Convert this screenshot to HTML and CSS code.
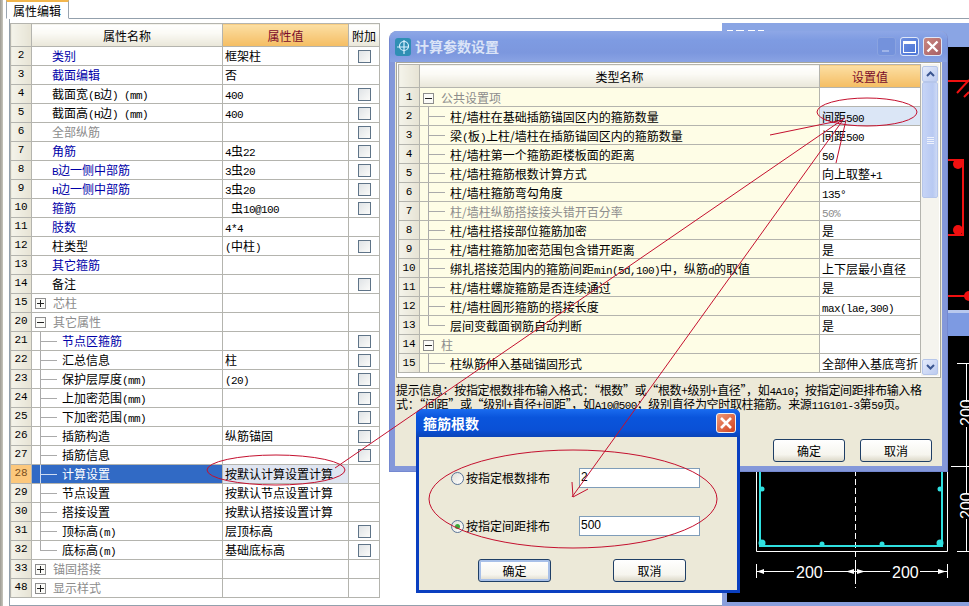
FILE: index.html
```html
<!DOCTYPE html>
<html lang="zh-CN">
<head>
<meta charset="utf-8">
<title>属性编辑</title>
<link rel="stylesheet" href="styles.css">
</head>
<body>
<div class="page">
  <div class="stripe"></div>
  <main class="editor">
    <div class="tab">属性编辑</div>
    <section class="panel">
      <table class="grid props">
        <colgroup><col class="c-num"><col class="c-name"><col class="c-val"><col class="c-add"></colgroup>
        <thead><tr><th class="num"></th><th>属性名称</th><th class="on">属性值</th><th>附加</th></tr></thead>
        <tbody>
          <tr><td class="num">2</td><td class="n blue">类别</td><td>框架柱</td><td class="add"><span class="cb"></span></td></tr>
          <tr><td class="num">3</td><td class="n blue">截面编辑</td><td>否</td><td></td></tr>
          <tr><td class="num">4</td><td class="n">截面宽<span class="m">(B</span>边<span class="m">) (mm)</span></td><td><span class="m">400</span></td><td class="add"><span class="cb"></span></td></tr>
          <tr><td class="num">5</td><td class="n">截面高<span class="m">(H</span>边<span class="m">) (mm)</span></td><td><span class="m">400</span></td><td class="add"><span class="cb"></span></td></tr>
          <tr><td class="num">6</td><td class="n grey">全部纵筋</td><td></td><td class="add"><span class="cb"></span></td></tr>
          <tr><td class="num">7</td><td class="n blue">角筋</td><td><span class="m">4</span>虫<span class="m">22</span></td><td class="add"><span class="cb"></span></td></tr>
          <tr><td class="num">8</td><td class="n blue"><span class="m">B</span>边一侧中部筋</td><td><span class="m">3</span>虫<span class="m">20</span></td><td class="add"><span class="cb"></span></td></tr>
          <tr><td class="num">9</td><td class="n blue"><span class="m">H</span>边一侧中部筋</td><td><span class="m">3</span>虫<span class="m">20</span></td><td class="add"><span class="cb"></span></td></tr>
          <tr><td class="num">10</td><td class="n blue">箍筋</td><td><span class="m"> </span>虫<span class="m">10@100</span></td><td class="add"><span class="cb"></span></td></tr>
          <tr><td class="num">11</td><td class="n blue">肢数</td><td><span class="m">4*4</span></td><td></td></tr>
          <tr><td class="num">12</td><td class="n">柱类型</td><td><span class="m">(</span>中柱<span class="m">)</span></td><td class="add"><span class="cb"></span></td></tr>
          <tr><td class="num">13</td><td class="n blue">其它箍筋</td><td></td><td></td></tr>
          <tr><td class="num">14</td><td class="n">备注</td><td></td><td class="add"><span class="cb"></span></td></tr>
          <tr><td class="num">15</td><td class="g grey"><span class="x plus"></span>芯柱</td><td></td><td></td></tr>
          <tr><td class="num">20</td><td class="g grey open"><span class="x"></span>其它属性</td><td></td><td></td></tr>
          <tr><td class="num">21</td><td class="t blue">节点区箍筋</td><td></td><td class="add"><span class="cb"></span></td></tr>
          <tr><td class="num">22</td><td class="t">汇总信息</td><td>柱</td><td class="add"><span class="cb"></span></td></tr>
          <tr><td class="num">23</td><td class="t">保护层厚度<span class="m">(mm)</span></td><td><span class="m">(20)</span></td><td class="add"><span class="cb"></span></td></tr>
          <tr><td class="num">24</td><td class="t">上加密范围<span class="m">(mm)</span></td><td></td><td class="add"><span class="cb"></span></td></tr>
          <tr><td class="num">25</td><td class="t">下加密范围<span class="m">(mm)</span></td><td></td><td class="add"><span class="cb"></span></td></tr>
          <tr><td class="num">26</td><td class="t">插筋构造</td><td>纵筋锚固</td><td class="add"><span class="cb"></span></td></tr>
          <tr><td class="num">27</td><td class="t">插筋信息</td><td></td><td class="add"><span class="cb"></span></td></tr>
          <tr class="sel"><td class="num">28</td><td class="t">计算设置</td><td>按默认计算设置计算</td><td></td></tr>
          <tr><td class="num">29</td><td class="t">节点设置</td><td>按默认节点设置计算</td><td></td></tr>
          <tr><td class="num">30</td><td class="t">搭接设置</td><td>按默认搭接设置计算</td><td></td></tr>
          <tr><td class="num">31</td><td class="t">顶标高<span class="m">(m)</span></td><td>层顶标高</td><td class="add"><span class="cb"></span></td></tr>
          <tr><td class="num">32</td><td class="t last">底标高<span class="m">(m)</span></td><td>基础底标高</td><td class="add"><span class="cb"></span></td></tr>
          <tr><td class="num">33</td><td class="g grey"><span class="x plus"></span>锚固搭接</td><td></td><td></td></tr>
          <tr><td class="num">48</td><td class="g grey"><span class="x plus"></span>显示样式</td><td></td><td></td></tr>
        </tbody>
      </table>
    </section>
  </main>

  <svg class="cad" width="247" height="586" viewBox="722 20 247 586">
    <rect x="722" y="20" width="247" height="586" fill="#fff"/>
    <rect x="722" y="23" width="247" height="24" fill="#8aa5e4"/>
    <path d="M727 31h6m3 0h8m4 0h7m3 0h6" stroke="#fff" stroke-width="2"/>
    <rect x="726" y="47" width="243" height="263" fill="#000"/>
    <g fill="none" stroke="#f01010" stroke-width="2">
      <path d="M948 81h21M957 93l12-13M964 97l5-5"/>
      <path d="M948 160h15v75h-15"/>
      <path d="M948 296h21"/>
    </g>
    <g fill="#f01010"><circle cx="958" cy="164" r="5"/><circle cx="958" cy="230" r="5"/><circle cx="969" cy="296" r="5"/></g>
    <rect x="722" y="310" width="247" height="26" fill="#7d9ae2"/>
    <rect x="722" y="310" width="247" height="3" fill="#b8c8ee"/>
    <rect x="722" y="336" width="5" height="270" fill="#8a9fdc"/>
    <rect x="727" y="336" width="242" height="266" fill="#000"/>
    <rect x="727" y="602" width="242" height="4" fill="#8a9fdc"/>
    <g fill="none" stroke="#fff" stroke-width="1">
      <path d="M756.500 470v81.500h191V470"/>
      <path d="M855.500 470v118" stroke-dasharray="6 3"/>
      <path d="M757 571.500h37m30 0h31M856 571.500h34m30 0h27"/>
      <path d="M756.500 564v14M855.500 564v14M947.500 564v14"/>
      <path d="M957 363.500h12M957 551.500h12M951 466.500h18" />
      <path d="M966.500 364v38m0 25v66m0 26v32"/>
    </g>
    <path d="M760 470v76h182v-76" fill="none" stroke="#2fe0e0" stroke-width="2"/>
    <g fill="#2fe0e0">
      <circle cx="762" cy="489" r="2.500"/><circle cx="940" cy="489" r="2.500"/>
      <circle cx="762" cy="543" r="3.500"/><circle cx="822" cy="544" r="2.500"/><circle cx="882" cy="544" r="2.500"/><circle cx="940" cy="543" r="3.500"/>
    </g>
    <g fill="#fff">
      <path d="M757 571.500l7-2.500v5zM846 571.500l8-2.500v5zM865 571.500l-8-2.500v5zM946 571.500l-8-2.500v5z"/>
      <text x="796" y="578" class="dim">200</text>
      <text x="892" y="578" class="dim">200</text>
      <text class="dim" transform="translate(972 426) rotate(-90)">200</text>
      <text class="dim" transform="translate(972 519) rotate(-90)">200</text>
    </g>
  </svg>

  <section class="win calc">
    <header class="cap">
      <svg class="logo" width="16" height="18" viewBox="0 0 16 18">
        <rect width="16" height="18" rx="3" fill="#2f8fb4"/>
        <circle cx="9" cy="8" r="4.500" fill="none" stroke="#d8f0ff" stroke-width="1.200"/>
        <path d="M9 2v14M2 9h12" stroke="#d8f0ff" stroke-width="1.200" fill="none"/>
      </svg>
      <span class="cap-t">计算参数设置</span>
      <div class="btns">
        <span class="wb dim-b"><i class="g-min"></i></span>
        <span class="wb"><i class="g-max"></i></span>
        <span class="wb cl"><svg width="13" height="13" viewBox="0 0 13 13"><path d="M1.500 1.500l10 10M11.500 1.500l-10 10" stroke="#fff" stroke-width="2.400"/></svg></span>
      </div>
    </header>
    <div class="calc-body">
      <div class="box">
        <div class="box-clip">
          <table class="grid params">
            <colgroup><col class="d-num"><col class="d-name"><col class="d-val"></colgroup>
            <thead><tr><th class="num"></th><th>类型名称</th><th class="on">设置值</th></tr></thead>
            <tbody>
              <tr><td class="num">1</td><td class="g grey"><span class="x"></span>公共设置项</td><td></td></tr>
              <tr class="cur"><td class="num">2</td><td class="t top">柱/墙柱在基础插筋锚固区内的箍筋数量</td><td>间距<span class="m">500</span></td></tr>
              <tr><td class="num">3</td><td class="t">梁<span class="m">(</span>板<span class="m">)</span>上柱/墙柱在插筋锚固区内的箍筋数量</td><td>间距<span class="m">500</span></td></tr>
              <tr><td class="num">4</td><td class="t">柱/墙柱第一个箍筋距楼板面的距离</td><td><span class="m">50</span></td></tr>
              <tr><td class="num">5</td><td class="t">柱/墙柱箍筋根数计算方式</td><td>向上取整<span class="m">+1</span></td></tr>
              <tr><td class="num">6</td><td class="t">柱/墙柱箍筋弯勾角度</td><td><span class="m">135°</span></td></tr>
              <tr><td class="num">7</td><td class="t grey">柱/墙柱纵筋搭接接头错开百分率</td><td class="grey"><span class="m">50%</span></td></tr>
              <tr><td class="num">8</td><td class="t">柱/墙柱搭接部位箍筋加密</td><td>是</td></tr>
              <tr><td class="num">9</td><td class="t">柱/墙柱箍筋加密范围包含错开距离</td><td>是</td></tr>
              <tr><td class="num">10</td><td class="t">绑扎搭接范围内的箍筋间距<span class="m">min(5d,100)</span>中，纵筋<span class="m">d</span>的取值</td><td>上下层最小直径</td></tr>
              <tr><td class="num">11</td><td class="t">柱/墙柱螺旋箍筋是否连续通过</td><td>是</td></tr>
              <tr><td class="num">12</td><td class="t">柱/墙柱圆形箍筋的搭接长度</td><td><span class="m">max(lae,300)</span></td></tr>
              <tr><td class="num">13</td><td class="t last">层间变截面钢筋自动判断</td><td>是</td></tr>
              <tr><td class="num">14</td><td class="g grey"><span class="x"></span>柱</td><td></td></tr>
              <tr><td class="num">15</td><td class="t top">柱纵筋伸入基础锚固形式</td><td>全部伸入基底弯折</td></tr>
            </tbody>
          </table>
        </div>
        <div class="sbar">
          <span class="sb-btn"><svg width="9" height="6" viewBox="0 0 9 6"><path d="M1 5l3.500-3.500L8 5" fill="none" stroke="#3a5590" stroke-width="2"/></svg></span>
          <span class="thumb"><i></i><i></i><i></i><i></i></span>
          <span class="sb-btn sb-end"><svg width="9" height="6" viewBox="0 0 9 6"><path d="M1 1l3.500 3.500L8 1" fill="none" stroke="#3a5590" stroke-width="2"/></svg></span>
        </div>
      </div>
      <p class="hint">提示信息：按指定根数排布输入格式：“根数”或“根数+级别+直径”，如<span class="m">4A10</span>；按指定间距排布输入格<br>式：“间距”或“级别+直径+间距”，如<span class="m">A10@500</span>；级别直径为空时取柱箍筋。来源<span class="m">11G101-3</span>第<span class="m">59</span>页。</p>
      <div class="foot">
        <button class="btn">确定</button>
        <button class="btn">取消</button>
      </div>
    </div>
  </section>

  <section class="win hoop">
    <header class="cap2">
      <span class="cap2-t">箍筋根数</span>
      <span class="wb2"><svg width="14" height="14" viewBox="0 0 14 14"><path d="M2 2l10 10M12 2L2 12" stroke="#fff" stroke-width="2.600"/></svg></span>
    </header>
    <div class="hoop-body">
      <div class="opt"><span class="rad"></span><span class="lab">按指定根数排布</span><span class="inp">2</span></div>
      <div class="opt"><span class="rad chk"></span><span class="lab">按指定间距排布</span><span class="inp">500</span></div>
      <div class="foot2">
        <button class="btn focus">确定</button>
        <button class="btn">取消</button>
      </div>
    </div>
  </section>

  <svg class="marks" width="969" height="606" viewBox="0 0 969 606">
    <g fill="none" stroke="#c4102e" stroke-width="1">
      <ellipse cx="276" cy="470" rx="69" ry="15"/>
      <ellipse cx="867" cy="112" rx="50" ry="14"/>
      <ellipse cx="573" cy="499" rx="144" ry="49"/>
      <path d="M335 468L845 118"/>
      <path d="M843 120L572 497M572 482l1 15 15-8"/>
      <path d="M770 135l73-15M836 163l10-43"/>
    </g>
  </svg>
</div>
</body>
</html>
```
FILE: styles.css
```css
* { box-sizing: border-box; }
html, body { margin: 0; padding: 0; background: #fff; }
.page {
  position: relative;
  width: 969px;
  height: 606px;
  overflow: hidden;
  display: flex;
  font: 12px/18px "Noto Sans CJK SC", "Liberation Sans", sans-serif;
  color: #000;
  background: #fff;
}
.stripe { width: 3px; flex: none; background: linear-gradient(90deg, #9c9a92, #c8c6bc); }
.editor { flex: 1; display: flex; flex-direction: column; padding-left: 3px; min-width: 0; }
.tab {
  width: 63px;
  height: 19px;
  margin-bottom: -1px;
  position: relative;
  z-index: 1;
  padding: 0 0 0 6px;
  line-height: 18px;
  background: #fff;
  border: 1px solid #9aa5b0;
  border-top: 2px solid #f2b64c;
  border-bottom-color: #fff;
}
.panel {
  flex: 1;
  margin-left: 3px;
  padding: 4px 0 0 0;
  border: 1px solid #93a0ac;
  border-right: 0;
}
.grid { border-collapse: collapse; table-layout: fixed; background: #fff; }
.grid th, .grid td {
  padding: 0;
  border: 1px solid #b4b4ae;
  height: 19px;
  line-height: 17px;
  font-weight: 400;
  white-space: nowrap;
  overflow: hidden;
}
.grid th {
  height: 23px;
  text-align: center;
  background: linear-gradient(#fff, #fbfaf5 40%, #e9e6d8);
}
.grid th.on { background: linear-gradient(#fbdfa4, #f5bd62); color: #7a0b2a; }
.grid td { padding-left: 2px; }
.grid td.num, .grid th.num {
  padding: 0;
  text-align: center;
  font: 11px/17px "Liberation Mono", monospace;
  background: linear-gradient(90deg, #f4f3ea, #e6e3d4);
}
.props { width: 369px; }
.props td:not(.add) { padding-bottom: 1px; }
.c-num { width: 21px; }
.c-name { width: 191px; }
.c-val { width: 126px; }
.c-add { width: 31px; }
.m { font: 11px/10px "Liberation Mono", monospace; letter-spacing: -0.6px; white-space: pre; }
.blue { color: #0000a8; }
.grey, .grid td.grey { color: #8c8c8c; }
.grid td.n { padding-left: 20px; }
.grid td.g { padding-left: 3px; }
.grid td.t {
  padding-left: 30px;
  background-image: linear-gradient(#aaa, #aaa), linear-gradient(#aaa, #aaa);
  background-repeat: no-repeat;
  background-size: 1px 100%, 16px 1px;
  background-position: 8px 0, 9px 9px;
}
.grid td.t.last { background-size: 1px 10px, 16px 1px; }
.x {
  display: inline-block;
  position: relative;
  width: 11px;
  height: 11px;
  margin-right: 7px;
  vertical-align: -1px;
  background: #fbfbf8;
  border: 1px solid #8e8e8e;
}
.x::before { content: ""; position: absolute; left: 1px; right: 1px; top: 4px; height: 1px; background: #222; }
.x.plus::after { content: ""; position: absolute; top: 1px; bottom: 1px; left: 4px; width: 1px; background: #222; }
.add { text-align: center; }
.grid td.add { padding: 0; }
.cb {
  display: block;
  width: 13px;
  height: 13px;
  margin: 0 auto;
  border: 1px solid #5f7488;
  background: linear-gradient(135deg, #dfe3e6, #fbfbf9);
}
.sel td.num { background: #fcc87c; color: #7a5020; }
.sel td.t {
  color: #fff;
  background-color: #316ac5;
  background-image: linear-gradient(#cfdcf2, #cfdcf2), linear-gradient(#cfdcf2, #cfdcf2);
}
.sel td:nth-child(3) { background: #dfe5f1; }

.cad { position: absolute; left: 722px; top: 20px; }
.dim { font: 16px "Liberation Sans", sans-serif; fill: #fff; }

.win { position: absolute; display: flex; flex-direction: column; }
.calc {
  left: 389px;
  top: 31px;
  width: 559px;
  height: 441px;
  background: #ece9d8;
  border: 1px solid #7488d0;
  border-top: 0;
  border-radius: 8px 8px 0 0;
  box-shadow: inset 0 0 0 5px #8498da;
  overflow: hidden;
}
.cap {
  flex: none;
  height: 31px;
  display: flex;
  align-items: center;
  padding: 0 5px 1px 5px;
  background: linear-gradient(#8ea7e6, #7e9be2 30%, #7c97de 70%, #8aa3e4);
}
.logo { flex: none; margin-right: 4px; margin-top: 1px; }
.cap-t { font-size: 14px; font-weight: 700; color: #dbe4f7; }
.btns { margin-left: auto; display: flex; gap: 4px; margin-top: 1px; }
.wb {
  width: 19px;
  height: 19px;
  display: flex;
  align-items: center;
  justify-content: center;
  border: 1px solid #dfe7f8;
  border-radius: 3px;
  background: linear-gradient(135deg, #6e8fe0, #4a74d6);
  position: relative;
}
.wb.dim-b { border-color: #8aa3e0; background: #7492dc; }
.wb.cl { background: linear-gradient(135deg, #c9877f, #a85f66); }
.g-min { position: absolute; left: 4px; bottom: 3px; width: 7px; height: 2px; background: #9fb4e8; }
.g-max { width: 13px; height: 12px; border: 1px solid #fff; border-top-width: 3px; }
.calc-body {
  flex: 1;
  padding: 0 6px 0;
  display: flex;
  flex-direction: column;
  min-height: 0;
}
.box {
  flex: none;
  height: 316px;
  display: flex;
  padding: 1px;
  background: #fff;
  border: 1px solid #a6a69c;
}
.box-clip { height: 100%; overflow: hidden; }
.params { width: 522px; }
.d-num { width: 21px; }
.d-name { width: 400px; }
.d-val { width: 101px; }
.params td:nth-child(2) { background-color: #fefde6; }
.params .cur td:nth-child(3) { background: #dbe6f6; }
.sbar {
  flex: 1;
  display: flex;
  flex-direction: column;
  align-items: center;
  padding: 2px 1px 0;
  background: #f5f4ee;
}
.sb-btn {
  flex: none;
  width: 16px;
  height: 16px;
  display: flex;
  align-items: center;
  justify-content: center;
  border: 1px solid #b6c6ea;
  border-radius: 2px;
  background: linear-gradient(135deg, #e4ebfb, #bccbf0);
}
.sb-end { margin-top: auto; margin-bottom: 1px; }
.thumb {
  flex: none;
  width: 16px;
  height: 116px;
  display: flex;
  flex-direction: column;
  align-items: center;
  justify-content: center;
  gap: 1px;
  border: 1px solid #b6c6ea;
  border-radius: 2px;
  background: linear-gradient(90deg, #c6d4f6, #b8c9f2 70%, #cdd9f5);
}
.thumb i { width: 7px; height: 1px; background: #eef2fc; }
.hint { margin: 5px 0 0; font-size: 12px; line-height: 13px; white-space: nowrap; letter-spacing: -0.35px; }
.foot { display: flex; justify-content: flex-end; gap: 15px; margin-top: 28px; padding-right: 9px; }
.foot .btn { width: 72px; height: 23px; }
.btn {
  width: 73px;
  height: 23px;
  padding: 0;
  font: 12px/18px "Noto Sans CJK SC", sans-serif;
  color: #000;
  border: 1px solid #1f3f66;
  border-radius: 3px;
  background: linear-gradient(#fff, #f6f5ee 70%, #dcd8c8);
}

.hoop {
  left: 416px;
  top: 409px;
  width: 324px;
  height: 184px;
  border-radius: 6px 6px 0 0;
  background: #0a3fc0;
  padding: 0 3px 3px;
  overflow: hidden;
}
.cap2 {
  flex: none;
  height: 28px;
  display: flex;
  align-items: center;
  justify-content: space-between;
  margin: 0 -3px;
  padding-left: 7px;
  padding-right: 4px;
  background: linear-gradient(#1a6cf0, #0a55dc 30%, #0a50d6 75%, #0a44b8);
}
.cap2-t { color: #fff; font-size: 14px; font-weight: 700; }
.wb2 {
  width: 20px;
  height: 20px;
  display: flex;
  align-items: center;
  justify-content: center;
  border: 1px solid #f2f2f2;
  border-radius: 3px;
  background: linear-gradient(135deg, #ee9a78, #d0401e);
}
.hoop-body {
  flex: 1;
  min-height: 0;
  background: #ece9d8;
  padding: 31px 0 0 32px;
  display: flex;
  flex-direction: column;
}
.opt { flex: none; display: flex; align-items: center; height: 20px; margin-bottom: 28px; }
.rad {
  flex: none;
  width: 13px;
  height: 13px;
  border-radius: 50%;
  border: 1px solid #5a7498;
  background: linear-gradient(135deg, #e0e0d8, #fff);
  display: flex;
  align-items: center;
  justify-content: center;
}
.rad.chk::after { content: ""; width: 5px; height: 5px; border-radius: 50%; background: #3aa83a; }
.lab { width: 113px; margin-left: 2px; font-size: 12px; }
.inp {
  width: 121px;
  height: 20px;
  padding-left: 1px;
  line-height: 17px;
  font-family: "Liberation Sans", sans-serif;
  background: #fff;
  border: 1px solid #7f9db9;
}
.foot2 { flex: none; display: flex; gap: 62px; margin: -5px 0 0 27px; }
.btn.focus { box-shadow: inset 0 0 0 2px #a8c0e8; }

.marks { position: absolute; left: 0; top: 0; pointer-events: none; }
```
